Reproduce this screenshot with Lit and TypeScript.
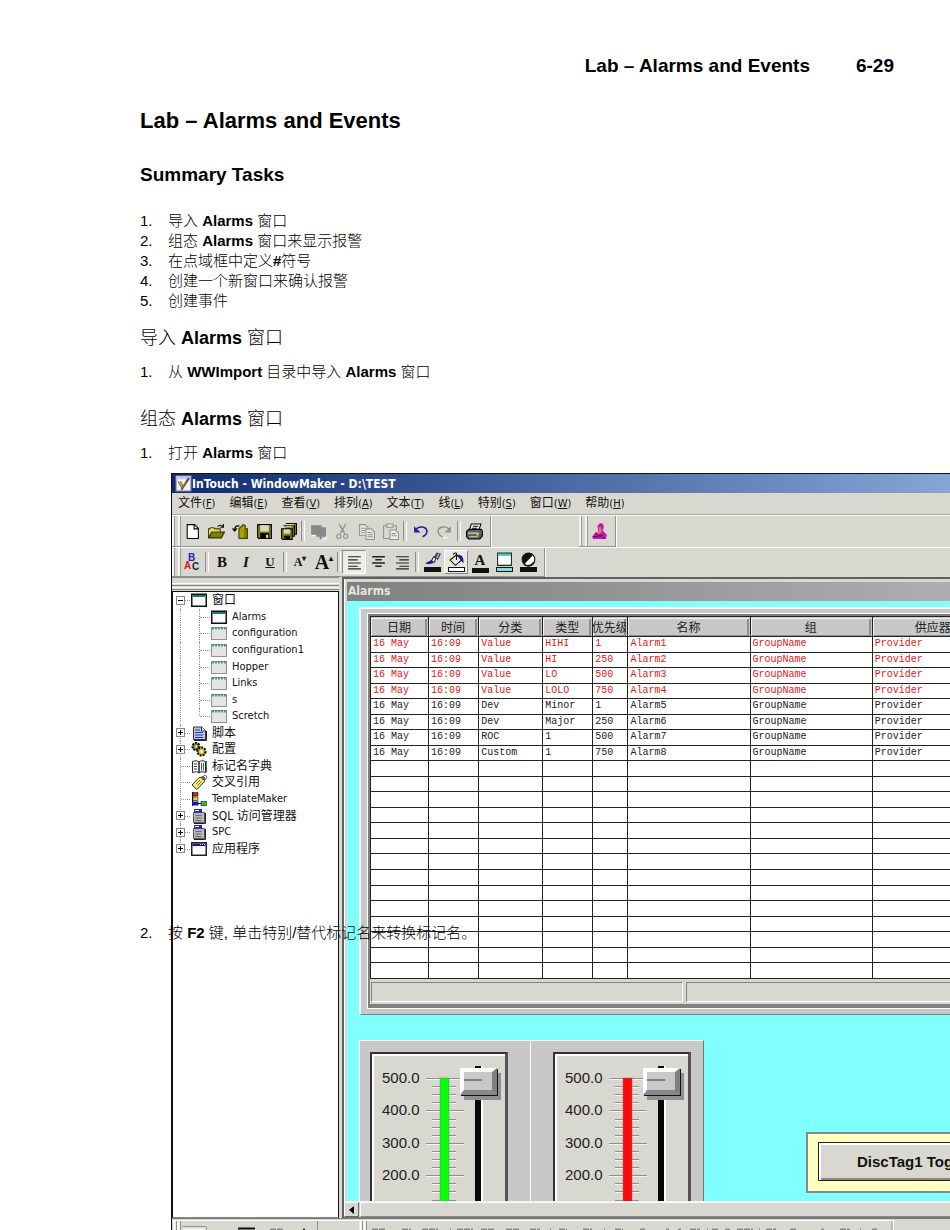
import { LitElement, html, svg, css, nothing, TemplateResult } from "lit";
import { customElement, property } from "lit/decorators.js";

const GREY = "#909090";

const icons: Record<string, TemplateResult> = {
  app: svg`<path d="M1 1h14v14H1z" fill="#f4f4ff" stroke="#889" /><path d="M1 1h14v3H1z" fill="#b8c8e8"/><path d="M3 6l4 7M5 6l3 5" stroke="#b08030" stroke-width="1.5"/><path d="M13 3L6 14" stroke="#607040" stroke-width="2"/><path d="M13.5 3l-3 4" stroke="#a02020" stroke-width="1"/>`,
  new: svg`<path d="M3 1.500h7l3.500 3.500v9.500h-10.500z" fill="#fff" stroke="#000"/><path d="M9.500 1.500v4h4" fill="none" stroke="#000"/>`,
  open: svg`<path d="M.5 14V5.500h1l1-1h3l1 1h5v3" fill="#e8e070" stroke="#404000"/><path d="M.5 14l3-5.500h12L12.500 14z" fill="#808000" stroke="#303000"/><path d="M9 3.500c2-2 4-1.500 5 0M14.500 1v3h-3" fill="none" stroke="#000"/>`,
  import: svg`<path d="M6.500 14.500v-9l4-4 2 1v12z" fill="#a8a000" stroke="#404000"/><path d="M12.500 5.500h2v9h-4" fill="#808000" stroke="#404000"/><path d="M7 3C4 2 2.500 3.500 2.500 7M.5 5l2 2.500L4.500 5" fill="none" stroke="#000" stroke-width="1.200"/>`,
  save: svg`<path d="M1.500 1.500h13v13h-12l-1-1z" fill="#808000" stroke="#000"/><path d="M4 2h8v6H4z" fill="#d8d8d0"/><path d="M4 9.500h8.500v5H4z" fill="#000"/><path d="M9.500 11h2v3h-2z" fill="#d8d8d0"/>`,
  saveall: svg`<path d="M5.500.5h10v10h-2" fill="#808000" stroke="#000"/><path d="M3.500 2.500h10v10h-2" fill="#808000" stroke="#000"/><path d="M1.500 5.500h10v10h-9l-1-1z" fill="#808000" stroke="#000"/><path d="M3.500 6h6v4h-6z" fill="#d8d8d0"/><path d="M4 12h5.500v3H4z" fill="#000"/><path d="M6 1.500h7M4.500 3.500h7" stroke="#d8d8d0"/>`,
  group: svg`<path d="M1 2h10v2h4v9h-2v2H9v-2H6v-2H1z" fill="#888"/><path d="M12 13v2h3v-2M2 11v1h3" stroke="#fff" fill="none"/>`,
  cut: svg`<path d="M5 1l5 9M11 1L6 10" stroke="${GREY}" stroke-width="1.300"/><circle cx="4.500" cy="12.500" r="2" fill="none" stroke="${GREY}"/><circle cx="11" cy="12.500" r="2" fill="none" stroke="${GREY}"/>`,
  copy: svg`<path d="M1.500 1.500h5l3 3v7h-8z" fill="#e8e8e0" stroke="${GREY}"/><path d="M7.500 5.500h5l3 3v7h-8z" fill="#e8e8e0" stroke="${GREY}"/><path d="M3 5h4M3 7h4M3 9h3M9 9h4M9 11h5M9 13h5" stroke="${GREY}"/>`,
  paste: svg`<path d="M1.500 2.500h12v12h-12z" fill="none" stroke="${GREY}"/><path d="M4.500 1h6v3h-6z" fill="#e8e8e0" stroke="${GREY}"/><path d="M7.500 6.500h5l3 3v6h-8z" fill="#f0f0e8" stroke="${GREY}"/><path d="M9 10h4M9 12h5" stroke="${GREY}"/>`,
  undo: svg`<path d="M3 7c3-5 11-4 11 1 0 3-2 4-4 5" fill="none" stroke="#2020a0" stroke-width="1.500"/><path d="M2 3v6h6z" fill="#2020a0"/>`,
  redo: svg`<path d="M13 7C10 2 2 3 2 8c0 3 2 4 4 5" fill="none" stroke="${GREY}" stroke-width="1.300"/><path d="M14 3v6H8z" fill="${GREY}"/><path d="M7 14h5" stroke="#fff"/>`,
  print: svg`<path d="M5 1h9l-2 6H3z" fill="#fff" stroke="#000"/><path d="M6.500 3h5M5.500 5h5" stroke="#000"/><path d="M.5 8l2-2h12l1 2v4l-2.500 3H2.500L.5 13z" fill="#606058" stroke="#000"/><path d="M2 9.500h10M3 13h8" stroke="#d8d8d0"/><path d="M10 11h2" stroke="#e0e000" stroke-width="1.500"/>`,
  wizard: svg`<path d="M6 3c1-3 6-3 6 0s-1 3-1 4l4 4-1 4H2l-1-2 3-4 3-1z" fill="#c818b8"/><path d="M8 4l1 4-3 2" stroke="#e08040" stroke-width="2" fill="none"/><path d="M4 10l6 3M5 13l6-2M2 13h4M11 14h2" stroke="#600060" fill="none"/><path d="M8 1l3 0" stroke="#702070"/>`,
  left: svg`<path d="M2 2.500h12M2 5.500h9M2 8.500h12M2 11.500h9M2 14h12" stroke="#222"/>`,
  center: svg`<path d="M2 2.500h12M5 5.500h6M2 8.500h12M5 11.500h6" stroke="#222" stroke-width="1.400"/>`,
  right: svg`<path d="M2 2.500h12M5 5.500h9M2 8.500h12M5 11.500h9M2 14h12" stroke="#222"/>`,
  pen: svg`<path d="M1 10l6-3 2 3-5 1z" fill="#2020a0"/><path d="M7 8l2-4 2 1-1 4z" fill="#fff" stroke="#222"/><path d="M9.500 4l2.500-4 4 1-3 6z" fill="#2828a8"/><path d="M12 5l2-4" stroke="#d8c000" stroke-width="1.500"/>`,
  fill: svg`<path d="M2 7l6-5 5 5-6 5z" fill="#e8e8e0" stroke="#111"/><path d="M8 7V1c0-1-3-1-3 1" fill="none" stroke="#111"/><path d="M9 2c4 0 6 2 5.500 8l-2-2z" fill="#1818a0"/>`,
  win: svg`<path d="M1.500.5h13v11.500h-13z" fill="#fff" stroke="#222"/><path d="M2 1h12v2H2z" fill="#30c8c0"/>`,
  disc: svg`<circle cx="8" cy="6.500" r="6" fill="#fff" stroke="#111"/><path d="M12.500 2L4 11A6 6 0 0 1 12.500 2z" fill="#111"/><path d="M4 11c2 2 7 2 9-2" fill="none" stroke="#111" stroke-width="1.500"/>`,
  window: svg`<path d="M.75 2.250h14.500v12h-14.500z" fill="#fff" stroke="#111" stroke-width="1.500"/><path d="M1.500 3h13v2h-13z" fill="#207878"/>`,
  closed: svg`<path d="M.5 2.500h15v12H.5z" fill="#e4e4e4"/><path d="M1 3.500h14" stroke="#40a0a0" stroke-width="2" stroke-dasharray="2 1"/><path d="M.5 2.500h15v12H.5z" fill="none" stroke="#333" stroke-dasharray="1 1"/>`,
  script: svg`<path d="M2.500 2h8l4 3.500v9h-12z" fill="#b8c4f4" stroke="#333"/><path d="M4 5h5M4 7.500h8M4 10h8M4 12.500h8" stroke="#2838a0"/><path d="M10.500 2v4h4" fill="#fff" stroke="#333"/><path d="M3 15.500h12.500V6" fill="none" stroke="#222"/>`,
  config: svg`<circle cx="5" cy="5.500" r="3.500" fill="#888838" stroke="#111" stroke-width="2.200" stroke-dasharray="2 1"/><circle cx="5" cy="5.500" r="1.200" fill="#ddd"/><circle cx="10.500" cy="10.500" r="4" fill="#d8c830" stroke="#111" stroke-width="2.200" stroke-dasharray="2 1"/><circle cx="10.500" cy="10.500" r="1.300" fill="#fff"/>`,
  book: svg`<path d="M1.500 3.500c3-1 5-1 6.500.5 1.500-1.500 3.500-1.500 6.500-.5v11c-3-1-5-1-6.500.5-1.500-1.500-3.500-1.500-6.500-.5z" fill="#fff" stroke="#222"/><path d="M8 4v11" stroke="#222" stroke-width="1.500"/><path d="M3 6h3M3 8.500h3M3 11h3" stroke="#333"/><path d="M10.500 5v7.500M12.500 5v7.500" stroke="#555"/><path d="M15.500 3v11.500" stroke="#0a6" /><path d="M15.500 9v4" stroke="#c22"/>`,
  tag: svg`<path d="M1 11l7-7.500 5-.5.5 4.500L6 15.500z" fill="#f0ec70" stroke="#333"/><circle cx="12" cy="4" r="1.200" fill="#fff" stroke="#333"/><path d="M12 4c0-4 4-3 3.500-.5S13 7 12 5" fill="none" stroke="#444"/><path d="M5 10l4-4M6.500 11.500l4-4" stroke="#807820"/>`,
  template: svg`<path d="M1.500 1v14" stroke="#111"/><path d="M2 1.500h5v3.500H2z" fill="#e02020" stroke="#111" stroke-width=".6"/><path d="M2 6h5v3.500H2z" fill="#e8d820" stroke="#111" stroke-width=".6"/><path d="M1.500 10.500h6v4h-6z" fill="#1818c0"/><path d="M7 12.500h4" stroke="#111"/><path d="M10 10.500h5.500v4H10z" fill="#30c030" stroke="#111" stroke-width=".6"/>`,
  server: svg`<path d="M2.500 4.500h11v10h-11z" fill="#b8b8b8" stroke="#555"/><path d="M3 1h8v3.500H3z" fill="#2828c8"/><path d="M4 2.500h4" stroke="#fff"/><path d="M4.500 7.500h6M4.500 10h6M4.500 12.500h6" stroke="#666"/><path d="M3 15.500h11.500V5" fill="none" stroke="#222"/>`,
  appwin: svg`<path d="M.75 1.750h14.500v12.500h-14.500z" fill="#fff" stroke="#222" stroke-width="1.500"/><path d="M1.500 2.500h13v2.500h-13z" fill="#181878"/><path d="M9 3.500h5" stroke="#c8c8e8" stroke-dasharray="1 1"/>`,
};

const icon = (name: string) =>
  html`<svg class="ico" viewBox="0 0 16 16" aria-hidden="true">${icons[name]}</svg>`;

const base = css`
  * { box-sizing: border-box; }
  button { font: inherit; color: inherit; border: 0; padding: 0; margin: 0; background: none; }
  .ico { width: 17px; height: 17px; display: block; flex: none; }
  ul, ol { list-style: none; margin: 0; padding: 0; }
`;

@customElement("menu-bar")
class MenuBar extends LitElement {
  static styles = [base, css`
    :host { display: flex; height: 22px; padding: 0 6px; gap: 14px; align-items: center; color: #111;
      font: 12px/20px "DejaVu Sans Condensed", "Noto Sans CJK SC", sans-serif; border-bottom: 1px solid #a8a8a0; }
    button { white-space: nowrap; }
    .key { font-size: 11px; }
  `];
  render() {
    const items = [["文件", "F"], ["编辑", "E"], ["查看", "V"], ["排列", "A"], ["文本", "T"], ["线", "L"], ["特别", "S"], ["窗口", "W"], ["帮助", "H"]];
    return items.map(([t, k]) => html`<button>${t}<span class="key">(<u>${k}</u>)</span></button>`);
  }
}

@customElement("tool-bars")
class ToolBars extends LitElement {
  static styles = [base, css`
    :host { display: block; }
    .row { display: flex; gap: 88px; border-top: 1px solid #fff; }
    .bar { display: flex; align-items: center; height: 31px; padding: 0 4px 0 0; border-right: 1px solid #909090;
      border-bottom: 1px solid #909090; box-shadow: 1px 0 #fff; }
    .second { height: 29px; }
    .grip { width: 8px; height: 100%; border-left: 2px solid #f4f4f0; border-right: 2px solid #f4f4f0;
      box-shadow: inset 1px 0 #999, 1px 0 #999; }
    .sep { width: 6px; height: 20px; display: flex; justify-content: center; }
    .sep::before { content: ""; width: 2px; border-left: 1px solid #909090; border-right: 1px solid #fff; }
    button { width: 24px; height: 24px; display: flex; flex-direction: column; align-items: center; justify-content: center;
      font: bold 15px/16px "Liberation Serif", serif; color: #111; }
    .on { border: 1px solid; border-color: #888 #fff #fff #888; background: #ecece8; }
    .up { border: 1px solid; border-color: #fff #888 #888 #fff; background: #e8e8e4; }
    .small { font-size: 12px; }
    .large { font-size: 20px; }
    .it { font-style: italic; }
    .un { text-decoration: underline; font-size: 13px; }
    .row sup { font-size: 8px; line-height: 8px; }
    .swatch { width: 17px; height: 5px; background: #111; border: 1px solid #111; flex: none; }
    .white { background: #fff; }
    .teal { background: #80e0e0; }
    .short { height: 15px; }
    .abc { font: bold 10px "Liberation Sans", sans-serif; }
    .spell { width: 18px; height: 18px; }
  `];
  tool(name: string, cls = "") {
    return name === "|" ? html`<span class="sep"></span>` : html`<button class=${cls} aria-label=${name}>${icon(name)}</button>`;
  }
  render() {
    const first = ["new", "open", "import", "save", "saveall", "|", "group", "cut", "copy", "paste", "|", "undo", "redo", "|", "print"];
    const paint = (name: string, swatch = "", cls = "") =>
      html`<button class=${cls} aria-label=${name}><svg class="ico short" viewBox="0 0 16 13" aria-hidden="true">${icons[name]}</svg><span class="swatch ${swatch}"></span></button>`;
    return html`
      <div class="row">
        <div class="bar"><span class="grip"></span>${first.map((n) => this.tool(n))}</div>
        <div class="bar"><span class="grip"></span>${this.tool("wizard")}</div>
      </div>
      <div class="row">
        <div class="bar second"><span class="grip"></span>
          <button aria-label="Fonts"><svg class="spell" viewBox="0 0 18 18" aria-hidden="true"><g class="abc"><text x="5" y="8" fill="#2020d0">B</text><text x="1" y="16" fill="#e01010">A</text><text x="9" y="17" fill="#222">C</text></g></svg></button>
          ${this.tool("|")}
          <button>B</button><button class="it">I</button><button class="un">U</button>
          ${this.tool("|")}
          <button class="small"><span>A<sup>▾</sup></span></button><button class="large"><span>A<sup>▴</sup></span></button>
          ${this.tool("|")}
          ${this.tool("left", "on")}${this.tool("center")}${this.tool("right")}
          ${this.tool("|")}
          ${paint("pen")}${paint("fill", "white", "up")}
          <button><span>A</span><span class="swatch"></span></button>
          ${paint("win", "teal")}${paint("disc")}
        </div>
      </div>`;
  }
}

@customElement("project-tree")
class ProjectTree extends LitElement {
  static styles = [base, css`
    :host { display: flex; flex-direction: column; width: 167px; flex: none; background: #d8d8d0; }
    .grip { height: 14px; border-top: 1px solid #888; display: flex; flex-direction: column; justify-content: flex-end; gap: 1px; padding-bottom: 1px; }
    .grip i { height: 3px; border-top: 1px solid #fff; border-bottom: 1px solid #888; }
    .pane { flex: 1; background: #fff; border: 1px solid #111; padding-left: 3px; border-bottom-color: #888; }
    .tree { display: grid; grid-auto-rows: 1fr; height: 265px; color: #111;
      font: 12px/16px "DejaVu Sans Condensed", "Noto Sans CJK SC", sans-serif; }
    .latin { font-size: 11px; }
    .row { display: flex; align-items: center; white-space: nowrap; min-height: 0; }
    .row .ico { width: 16px; height: 16px; margin-right: 5px; }
    .knot { align-self: stretch; width: 15px; flex: none; display: flex; align-items: center; position: relative; }
    .knot::before { content: ""; position: absolute; left: 4px; top: 0; bottom: 0; border-left: 1px dotted #999; }
    .knot.dash::after, .sub::after { content: ""; position: absolute; left: 5px; right: 1px; top: 50%; border-top: 1px dotted #999; }
    .first::before { top: 50%; }
    .last::before { bottom: 50%; }
    .sub { width: 20px; }
    .sub::before { left: 8px; }
    .sub::after { left: 9px; }
    .box { width: 9px; height: 9px; border: 1px solid #888; background: #fff; position: relative; z-index: 1;
      display: flex; align-items: center; justify-content: center; }
    .box::before { content: ""; width: 5px; height: 1px; background: #000; }
    .plus::after { content: ""; position: absolute; width: 1px; height: 5px; background: #000; }
  `];
  render() {
    const kids = ["Alarms", "configuration", "configuration1", "Hopper", "Links", "s", "Scretch"];
    const roots: [string, string, boolean][] = [
      ["脚本", "script", true], ["配置", "config", true], ["标记名字典", "book", false], ["交叉引用", "tag", false],
      ["TemplateMaker", "template", false], ["SQL 访问管理器", "server", true], ["SPC", "server", true], ["应用程序", "appwin", true]];
    return html`
      <div class="grip"><i></i><i></i></div>
      <div class="pane"><ul class="tree">
        <li class="row"><span class="knot dash first"><span class="box"></span></span>${icon("window")}窗口</li>
        ${kids.map((k, i) => html`<li class="row latin"><span class="knot"></span><span class="knot sub ${i === kids.length - 1 ? "last" : ""}"></span>${icon(i ? "closed" : "window")}${k}</li>`)}
        ${roots.map(([t, ic, plus], i) => html`<li class="row ${/^[\x00-\x7f]+$/.test(t) ? "latin" : ""}"><span class="knot dash ${i === roots.length - 1 ? "last" : ""}">${plus ? html`<span class="box plus"></span>` : nothing}</span>${icon(ic)}<span>${t}</span></li>`)}
      </ul></div>`;
  }
}

@customElement("alarm-grid")
class AlarmGrid extends LitElement {
  static styles = [base, css`
    :host { display: block; background: #c8c8c8; border-top: 2px solid #f8f8f8; border-left: 2px solid #f8f8f8;
      border-bottom: 1px solid #808080; padding: 4px 0 5px 6px; }
    .well { border: solid; border-color: #fff; border-width: 1px 0 1px 1px; }
    .inner { border: solid #808080; border-width: 2px 0 4px 2px; overflow: hidden; background: #d8d8d0; }
    table { table-layout: fixed; width: 625px; height: 363px; border-collapse: collapse; background: #fff; color: #222;
      font: 10px/12px "Liberation Mono", monospace; }
    tbody tr { height: 15px; }
    th, td { border: 1px solid #222; padding: 0 2px; text-align: left; white-space: pre; overflow: hidden; }
    thead th { height: 20px; padding: 0; background: #c8c8c8; font: 12px/16px "Noto Sans CJK SC", sans-serif; }
    .head { height: 18px; display: flex; align-items: center; justify-content: center; overflow: hidden;
      box-shadow: inset 1px 1px #f0f0f0, inset -2px -1px #909090; margin-right: 1px; }
    .hot { color: #e01818; }
    .date { width: 58px; } .time { width: 50px; } .cls { width: 64px; } .type { width: 50px; } .pri { width: 35px; }
    .wide { width: 122px; }
    .status { display: flex; gap: 3px; padding: 3px 0 2px 1px; }
    .status span { height: 20px; border: 1px solid; border-color: #808080 #fff #fff #808080; width: 312px; flex: none; }
    .status .rest { flex: 1 0 auto; }
  `];
  render() {
    const rows = [["Value", "HIHI", "1"], ["Value", "HI", "250"], ["Value", "LO", "500"], ["Value", "LOLO", "750"],
      ["Dev", "Minor", "1"], ["Dev", "Major", "250"], ["ROC", "1", "500"], ["Custom", "1", "750"]];
    const empty = Array.from({ length: 14 });
    const cols = ["date", "time", "cls", "type", "pri", "wide", "wide", "wide"];
    return html`<div class="well"><div class="inner">
      <table>
        <colgroup>${cols.map((c) => html`<col class=${c}>`)}</colgroup>
        <thead><tr>${["日期", "时间", "分类", "类型", "优先级", "名称", "组", "供应器"].map((h) => html`<th><div class="head">${h}</div></th>`)}</tr></thead>
        <tbody>
          ${rows.map((r, i) => html`<tr class=${i < 4 ? "hot" : ""}>${["16 May", "16:09", ...r, `Alarm${i + 1}`, "GroupName", "Provider"].map((c) => html`<td>${c}</td>`)}</tr>`)}
          ${empty.map(() => html`<tr>${cols.map(() => html`<td></td>`)}</tr>`)}
        </tbody>
      </table>
      <div class="status"><span></span><span class="rest"></span></div>
    </div></div>`;
  }
}

@customElement("level-slider")
class LevelSlider extends LitElement {
  @property() color = "#00ff00";
  @property() label = "";
  static styles = [base, css`
    :host { display: grid; grid-template-columns: 41px 38px 41px; padding: 12px 7px 11px 10px; width: 138px; height: 216px; background: #d8d8d0;
      border: 2px solid #333; border-right-width: 3px; border-right-color: #555; box-shadow: inset 2px 2px #fff; align-items: start; }
    .scale { font: 15px/32px "Liberation Sans", sans-serif; color: #222; text-align: right; white-space: nowrap; margin-top: -4px;
      display: grid; grid-auto-rows: 1fr; height: 194px; align-items: center; justify-self: start; }
    .ticks { display: block; width: 38px; height: 194px; margin-left: 3px; margin-top: -4px; }
    input { appearance: none; writing-mode: vertical-lr; direction: rtl; width: 43px; height: 190px; margin: 0 0 0 -4px; padding: 2px 0 0; background:
      linear-gradient(90deg, transparent 18px, #080808 18px 24px, #fff 24px 26px, transparent 26px); }
    input::-webkit-slider-thumb { appearance: none; width: 37px; height: 27px; border: solid; border-width: 4px 5px 5px 4px;
      border-color: #fff #808080 #888 #fff; background: linear-gradient(#808080, #808080) 0 7px / 18px 2px no-repeat #c8c8c8;
      box-shadow: 1px 1px #111, 4px 5px #909090; }
  `];
  render() {
    const ticks = Array.from({ length: 21 }, (_, i) => i);
    return html`
      <div class="scale">${[500, 400, 300, 200, 100, 0].map((n) => html`<span>${n.toFixed(1)}</span>`)}</div>
      <svg class="ticks" viewBox="0 0 38 194" aria-hidden="true">
        ${ticks.map((i) => {
          const y = 16 + Math.round(i * 8.1);
          const x = i % 4 ? 6 : 0;
          return svg`<path d="M${x} ${y + .5}H${38 - x - (x ? 2 : 0)}" stroke="#909090"/><path d="M${x} ${y + 1.500}H${38 - x - (x ? 2 : 0)}" stroke="#f4f4f0"/>`;
        })}
        <rect x="14" y="16" width="9" height="163" fill=${this.color} stroke="#707070" stroke-opacity=".4"/>
      </svg>
      <input type="range" min="0" max="500" value="500" aria-label=${this.label}>`;
  }
}

@customElement("draw-window")
class DrawWindow extends LitElement {
  static styles = [base, css`
    :host { display: flex; flex-direction: column; flex: 1; min-width: 0; border-left: 2px solid #606060; border-top: 2px solid #606060; margin-left: 3px; overflow: hidden; }
    .child { flex: 1; min-height: 0; display: flex; flex-direction: column; padding: 3px 0 0 2px; border-left: 1px solid #fff; }
    .title { flex: none; height: 19px; padding-left: 1px; color: #e4e4e0; background: linear-gradient(90deg, #808080, #b0adb0);
      font: bold 12px/18px "DejaVu Sans Condensed", sans-serif; }
    .canvas { flex: 1; min-height: 0; overflow: hidden; background: #80ffff; padding: 6px 0 0 12px; display: flex; flex-direction: column; gap: 25px; }
    .objects { display: flex; align-items: flex-start; gap: 102px; }
    .group { flex: none; display: flex; background: #c8c8c8; border: 1px solid #fff; border-right-color: #777; width: 345px; }
    .cell { flex: 1; padding: 11px 10px; }
    .cell + .cell { flex: 0 0 173px; border-left: 1px solid #fff; padding-left: 22px; }
    .plate { flex: none; margin-top: 92px; padding: 8px 10px 10px; background: #ffffc0; border: 2px solid #888; }
    .toggle { height: 39px; padding: 0 38px; border: 1px solid #222; background: #d8d8d0; box-shadow: inset 2px 2px #fff, inset -2px -2px #888;
      font: bold 15px/20px "Liberation Sans", sans-serif; color: #111; white-space: nowrap; }
    .scroll { flex: none; height: 17px; display: flex; gap: 1px; border-top: 1px solid #f0f0ec; border-bottom: 1px solid #777; }
    .arrow { width: 15px; border: 1px solid; border-color: #fff #666 #666 #fff; display: flex; align-items: center; justify-content: center; }
    .arrow svg { width: 5px; height: 8px; }
    .thumb { flex: 1; border: 1px solid; border-color: #fff #666 #888 #fff; border-right: 0; }
  `];
  render() {
    return html`
      <div class="child">
        <div class="title">Alarms</div>
        <div class="canvas">
          <alarm-grid></alarm-grid>
          <div class="objects">
            <div class="group">
              <div class="cell"><level-slider color="#08ff08" label="Level 1"></level-slider></div>
              <div class="cell"><level-slider color="#ff0808" label="Level 2"></level-slider></div>
            </div>
            <div class="plate"><button class="toggle">DiscTag1 Toggle</button></div>
          </div>
        </div>
      </div>
      <div class="scroll"><button class="arrow" aria-label="Scroll left"><svg viewBox="0 0 5 8"><path d="M5 0v8L0 4z"/></svg></button><span class="thumb"></span></div>`;
  }
}

@customElement("maker-window")
class MakerWindow extends LitElement {
  static styles = [base, css`
    :host { display: flex; flex-direction: column; min-height: 0; overflow: hidden; background: #d8d8d0; border-left: 1px solid #111; border-top: 1px solid #111; }
    .title { flex: none; display: flex; align-items: center; height: 19px; padding-left: 3px; color: #fff; white-space: nowrap;
      background: linear-gradient(90deg, #102a70, #a6caf0 128%); font: bold 12px/18px "DejaVu Sans Condensed", sans-serif; }
    .work { flex: 1; min-height: 0; display: flex; }
    .dock { flex: none; height: 12px; overflow: hidden; border-top: 1px solid #777; display: flex; }
    .dock svg { flex: none; width: 722px; height: 12px; }
  `];
  render() {
    return html`
      <div class="title">${icon("app")}<span>InTouch - WindowMaker - D:\\TEST</span></div>
      <menu-bar></menu-bar>
      <tool-bars></tool-bars>
      <div class="work"><project-tree></project-tree><draw-window></draw-window></div>
      <div class="dock"><svg viewBox="0 0 722 12" aria-hidden="true">
        <path d="M0 1.500h722" stroke="#fff"/>
        <path d="M2.500 2v10M6.500 2v10M188.500 2v10M192.500 2v10M721.500 2v10" stroke="#fff" stroke-width="2"/>
        <path d="M4.500 2v10M8.500 2v10M145.500 2v10M190.500 2v10M194.500 2v10M720 2v10" stroke="#909090"/>
        <path d="M10 7.500h24M34.500 8v4M76.500 9v3M278.500 9v3M378.500 9v3M432.500 9v3M535.500 9v3M587.500 9v3M688.500 9v3" stroke="#999"/>
        <path d="M11 9h22v3H11z" fill="#eeeeea"/>
        <path d="M66 9.500h17" stroke="#111" stroke-width="2"/>
        <path d="M132 9l-2 3h4z" fill="#111"/>
        <path d="M98 10.500h14M200 10.500h14M230 10.500h9M250 10.500h16M285 10.500h16M309 10.500h14M334 10.500h14M358 10.500h10M387 10.500h8M411 10.500h9M443 10.500h8M468 10.500h5M494 10.500h3M506 10.500h3M518 10.500h10M540 10.500h6M553 10.500h5M565 10.500h16M594 10.500h10M618 10.500h7M649 10.500h3M668 10.500h10M700 10.500h5" stroke="#888" stroke-dasharray="6 1" stroke-width="2"/>
      </svg></div>`;
  }
}

@customElement("app-root")
class AppRoot extends LitElement {
  static styles = [base, css`
    :host { display: block; }
    .sheet { height: 100vh; overflow: hidden; display: flex; flex-direction: column; padding: 54px 0 0 140px; background: #fff; color: #000;
      font: 300 15px/20px "Liberation Sans", "Noto Sans CJK SC", sans-serif; }
    header { display: flex; justify-content: flex-end; gap: 46px; padding-right: 56px; font-size: 19px; font-weight: 700; line-height: 24px; }
    b { font-weight: 700; }
    h1, h2, h3 { margin: 0; flex: none; }
    h1 { font-size: 22px; line-height: 28px; margin-top: 29px; }
    h2 { font-size: 19px; line-height: 24px; margin: 28px 0 24px; }
    h3 { font-size: 18px; line-height: 24px; font-weight: 300; margin: 15px 0 12px; }
    .apart { margin-top: 25px; }
    ol { flex: none; }
    li { display: grid; grid-template-columns: 28px 1fr; }
    figure { flex: 1; min-height: 0; margin: 10px 0 0; padding-left: 31px; display: grid; position: relative; }
    .over { position: absolute; left: 0; top: 450px; white-space: nowrap; }
  `];
  list(items: unknown[], start = 1, cls = "") {
    return html`<ol class=${cls}>${items.map((t, i) => html`<li><span>${i + start}.</span><span>${t}</span></li>`)}</ol>`;
  }
  render() {
    return html`<main class="sheet">
      <header><span>Lab – Alarms and Events</span><span>6-29</span></header>
      <h1>Lab – Alarms and Events</h1>
      <h2>Summary Tasks</h2>
      ${this.list([html`导入 <b>Alarms</b> 窗口`, html`组态 <b>Alarms</b> 窗口来显示报警`, html`在点域框中定义<b>#</b>符号`, "创建一个新窗口来确认报警", "创建事件"])}
      <h3>导入 <b>Alarms</b> 窗口</h3>
      ${this.list([html`从 <b>WWImport</b> 目录中导入 <b>Alarms</b> 窗口`])}
      <h3 class="apart">组态 <b>Alarms</b> 窗口</h3>
      ${this.list([html`打开 <b>Alarms</b> 窗口`])}
      <figure>
        <maker-window></maker-window>
        ${this.list([html`按 <b>F2</b> 键, 单击特别/替代标记名来转换标记名。`], 2, "over")}
      </figure>
    </main>`;
  }
}
